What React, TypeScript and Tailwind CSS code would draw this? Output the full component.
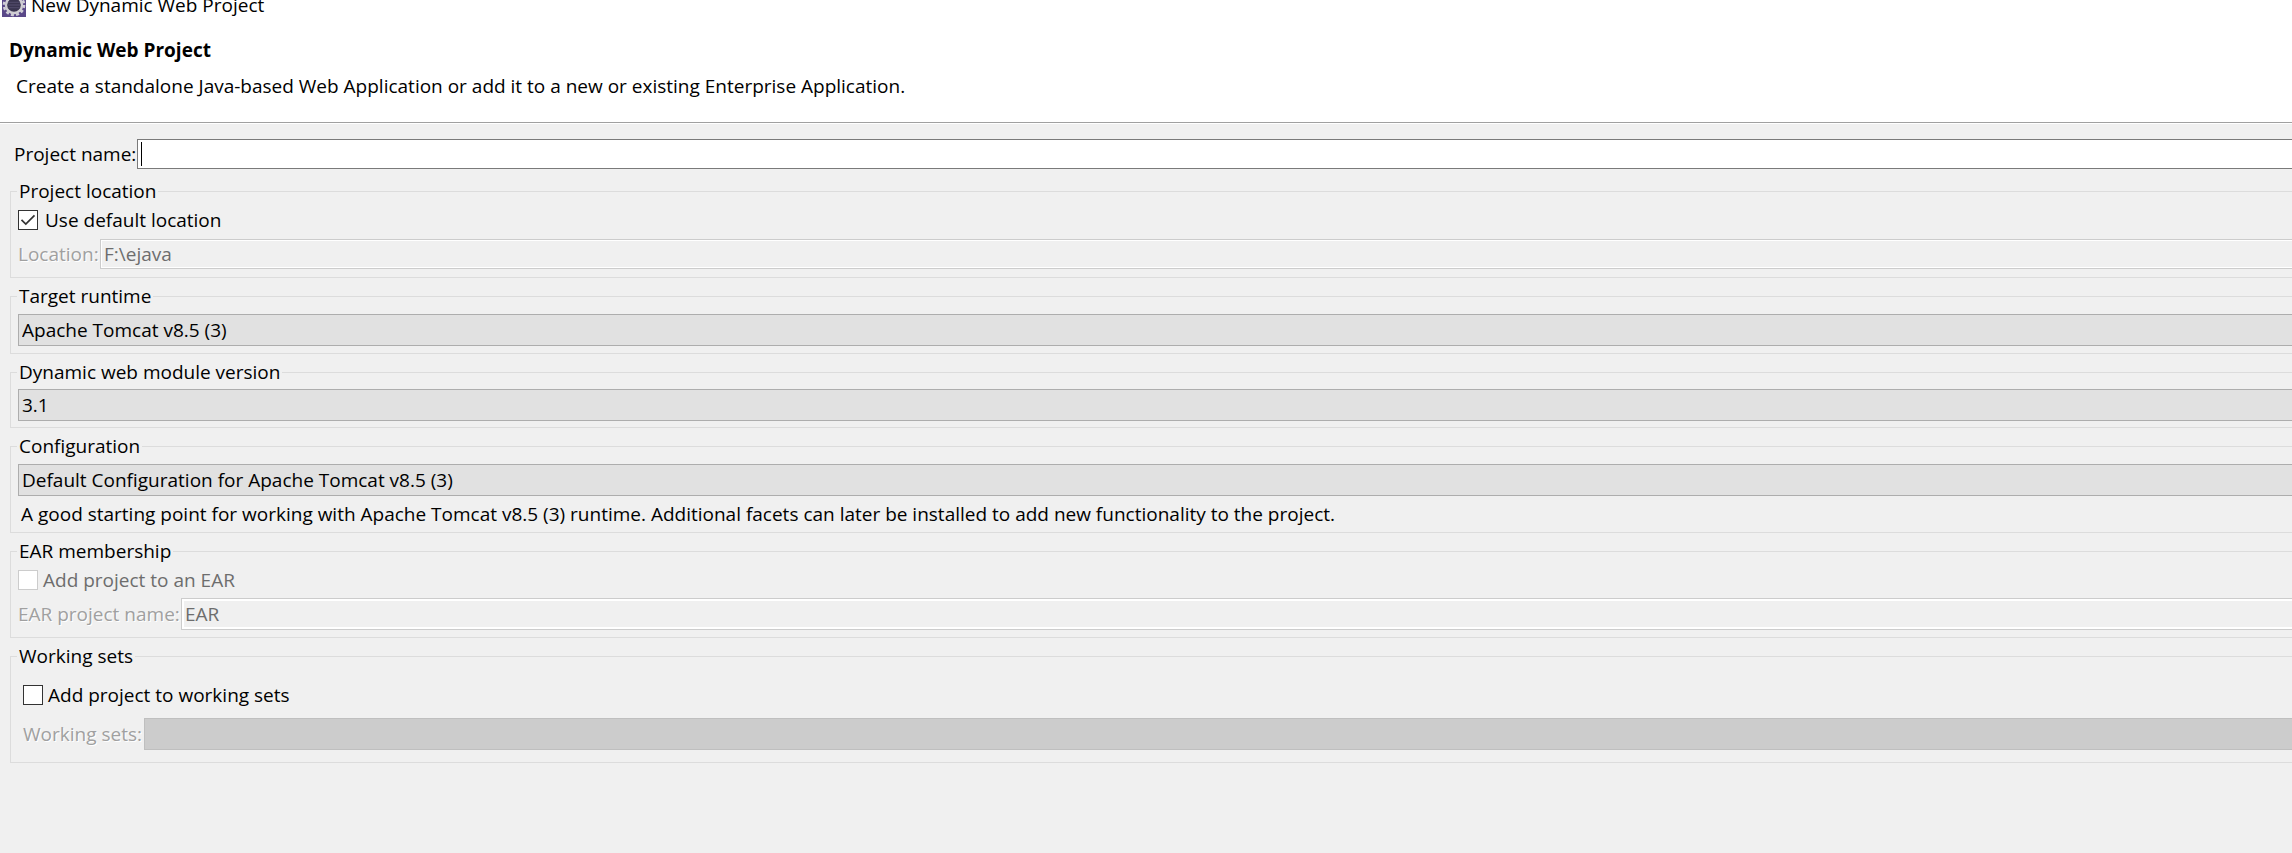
import React, { useState } from 'react';
import clsx from 'clsx';

interface GroupProps {
  title: string;
  className?: string;
  children: React.ReactNode;
}

const Group: React.FC<GroupProps> = ({ title, className, children }) => (
  <fieldset className={clsx('min-w-0 border border-r-0 border-[#dcdcdc] flex flex-col', className)}>
    <legend className="ml-[6px] px-[2px] h-[21px] leading-[21px]">{title}</legend>
    {children}
  </fieldset>
);

interface CheckProps {
  id: string;
  label: string;
  checked?: boolean;
  disabled?: boolean;
  onChange?: (checked: boolean) => void;
  className?: string;
}

const Check: React.FC<CheckProps> = ({ id, label, checked = false, disabled, onChange, className }) => (
  <div className={clsx('flex items-center h-[20px]', className)}>
    <span className="relative flex shrink-0">
      <input
        id={id}
        type="checkbox"
        checked={checked}
        disabled={disabled}
        onChange={(e) => onChange?.(e.target.checked)}
        className="appearance-none w-[20px] h-[20px] bg-white border border-[#333333] disabled:border-[#cccccc]"
      />
      {checked && (
        <svg className="absolute inset-0 pointer-events-none" width="20" height="20" viewBox="0 0 20 20" fill="none">
          <path d="M3.5 9.8 L7.8 14 L16.5 5.3" stroke="#333333" strokeWidth="1.7" />
        </svg>
      )}
    </span>
    <label htmlFor={id} className={clsx('leading-[20px]', disabled && 'text-[#6d6d6d]')}>
      {label}
    </label>
  </div>
);

interface ComboProps {
  id: string;
  label: string;
  options: string[];
}

const Combo: React.FC<ComboProps> = ({ id, label, options }) => (
  <select
    id={id}
    aria-label={label}
    className="appearance-none w-full h-[32px] pl-[3px] bg-[#e1e1e1] border border-r-0 border-[#adadad]"
  >
    {options.map((o) => (
      <option key={o}>{o}</option>
    ))}
  </select>
);

// gear on a purple tile
const AppIcon = () => (
  <svg width="24" height="24" viewBox="0 0 24 24" className="shrink-0">
    <rect width="24" height="24" fill="#5a4888" />
    <circle cx="12" cy="12" r="10" fill="none" stroke="#d0ced6" strokeWidth="2.6" strokeDasharray="3 2.236" />
    <circle cx="12" cy="12" r="8" fill="#3a3550" stroke="#cfcdd2" strokeWidth="2.4" />
    <path d="M6 9.4 H18 M5.6 12 H18.4 M6.4 14.6 H17.6" stroke="#4d4766" strokeWidth="1.4" />
  </svg>
);

const etched = 'text-[#a0a0a0] [text-shadow:1px_1px_0_#ffffff] whitespace-nowrap';

const App: React.FC = () => {
  const [name, setName] = useState('');
  const [useDefault, setUseDefault] = useState(true);
  const [addToSets, setAddToSets] = useState(false);

  return (
    <div className="min-h-screen overflow-hidden bg-[#f0f0f0] text-black text-[19px] font-['Open_Sans',sans-serif]">
      <header className="bg-white border-b border-[#a0a0a0]">
        <div className="-mt-[7px] h-[24px] pl-[2px] flex items-center gap-[5px]">
          <AppIcon />
          <span className="leading-[24px]">New Dynamic Web Project</span>
        </div>
        <h1 className="mt-[20px] pl-[9px] leading-[26px] font-bold">Dynamic Web Project</h1>
        <p className="mt-[10px] pb-[23px] pl-[16px] leading-[26px]">
          Create a standalone Java-based Web Application or add it to a new or existing Enterprise Application.
        </p>
      </header>

      <main className="border-t border-white pt-[15px] pl-[10px]">
        <div className="flex items-center pl-[4px] h-[30px]">
          <label htmlFor="project-name" className="w-[123px] shrink-0 whitespace-nowrap">
            Project name:
          </label>
          <div className="flex flex-1 items-center h-[30px] pl-[3px] bg-white border border-r-0 border-[#7a7a7a]">
            <span className="w-px h-[24px] bg-black" />
            <input
              id="project-name"
              type="text"
              value={name}
              onChange={(e) => setName(e.target.value)}
              className="flex-1 min-w-0 h-full bg-transparent outline-none"
            />
          </div>
        </div>

        <div className="mt-[12px] flex flex-col gap-[8px]">
          <Group title="Project location" className="pb-[8px]">
            <div className="pt-[8px] pl-[7px] flex flex-col gap-[9px]">
              <Check
                id="default-location"
                label="Use default location"
                checked={useDefault}
                onChange={setUseDefault}
                className="gap-[7px]"
              />
              <div className="flex items-center">
                <label htmlFor="location" className={clsx(etched, 'w-[82px] shrink-0')}>
                  Location:
                </label>
                <input
                  id="location"
                  type="text"
                  disabled
                  defaultValue="F:\ejava"
                  className="flex-1 min-w-0 -mr-[2px] h-[30px] pl-[3px] text-[#6d6d6d] border border-r-0 border-[#cccccc] shadow-[inset_0_0_0_1px_#ffffff]"
                />
              </div>
            </div>
          </Group>

          <Group title="Target runtime" className="pb-[7px]">
            <div className="pt-[7px] pl-[7px]">
              <Combo id="runtime" label="Target runtime" options={['Apache Tomcat v8.5 (3)']} />
            </div>
          </Group>

          <Group title="Dynamic web module version" className="pb-[6px]">
            <div className="pt-[6px] pl-[7px]">
              <Combo id="module-version" label="Dynamic web module version" options={['3.1']} />
            </div>
          </Group>

          <Group title="Configuration">
            <div className="pt-[7px] pl-[7px]">
              <Combo
                id="configuration"
                label="Configuration"
                options={['Default Configuration for Apache Tomcat v8.5 (3)']}
              />
              <p className="pl-[3px] leading-[36px]">
                A good starting point for working with Apache Tomcat v8.5 (3) runtime. Additional facets can later be
                installed to add new functionality to the project.
              </p>
            </div>
          </Group>

          <Group title="EAR membership" className="pb-[7px]">
            <div className="pt-[8px] pl-[7px] flex flex-col gap-[8px]">
              <Check id="add-ear" label="Add project to an EAR" disabled className="gap-[5px]" />
              <div className="flex items-center">
                <label htmlFor="ear-name" className={clsx(etched, 'w-[163px] shrink-0')}>
                  EAR project name:
                </label>
                <input
                  id="ear-name"
                  type="text"
                  disabled
                  defaultValue="EAR"
                  className="flex-1 min-w-0 -mr-[2px] h-[32px] pl-[3px] text-[#6d6d6d] border border-r-0 border-[#cccccc] shadow-[inset_0_0_0_2px_#ffffff]"
                />
              </div>
            </div>
          </Group>

          <Group title="Working sets" className="pb-[12px]">
            <div className="pt-[18px] pl-[12px] flex flex-col gap-[13px]">
              <Check
                id="add-sets"
                label="Add project to working sets"
                checked={addToSets}
                onChange={setAddToSets}
                className="gap-[5px]"
              />
              <div className="flex items-center">
                <label htmlFor="working-sets" className={clsx(etched, 'w-[121px] shrink-0')}>
                  Working sets:
                </label>
                <select
                  id="working-sets"
                  disabled={!addToSets}
                  className="appearance-none flex-1 min-w-0 h-[32px] bg-[#cccccc] border border-r-0 border-[#bfbfbf] opacity-100"
                />
              </div>
            </div>
          </Group>
        </div>
      </main>
    </div>
  );
};

export default App;
